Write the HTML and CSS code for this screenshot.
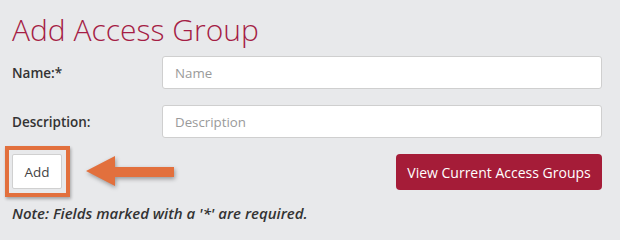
FILE: index.html
```html
<!DOCTYPE html>
<html lang="en">
<head>
<meta charset="utf-8">
<title>Add Access Group</title>
<link rel="stylesheet" href="styles.css">
</head>
<body>
<div class="page">
  <h1 class="title">Add Access Group</h1>
  <div class="row">
    <label class="label" for="name">Name:*</label>
    <input class="field" id="name" type="text" placeholder="Name">
  </div>
  <div class="row">
    <label class="label" for="desc">Description:</label>
    <input class="field" id="desc" type="text" placeholder="Description">
  </div>
  <div class="actions">
    <div class="add-wrap">
      <button class="btn-add" type="button">Add</button>
      <span class="highlight"></span>
      <svg class="arrow" width="94" height="36" viewBox="0 0 94 36">
        <path d="M2 18 L31 3 L31 14 L90 14 L90 24 L31 24 L31 33 Z" fill="#e2703d"/>
      </svg>
    </div>
    <button class="btn-view" type="button">View Current Access Groups</button>
  </div>
  <p class="note">Note: Fields marked with a '*' are required.</p>
</div>
</body>
</html>
```

FILE: styles.css
```css
html, body {
  margin: 0;
  padding: 0;
}
body {
  background: #e8e9eb;
  font-family: "Open Sans", "DejaVu Sans", sans-serif;
  color: #333;
}
.page {
  width: 620px;
  height: 234px;
  box-sizing: border-box;
  padding: 10px 18px 0 12px;
  display: flex;
  flex-direction: column;
}
.title {
  margin: 0 0 6px 0;
  font-size: 30px;
  line-height: 40px;
  font-weight: 300;
  color: #a51d45;
}
.row {
  display: flex;
  align-items: center;
  margin-bottom: 16px;
}
.label {
  width: 150px;
  flex: none;
  font-size: 13.5px;
  font-weight: 600;
  color: #333;
}
.field {
  flex: 1;
  height: 33px;
  box-sizing: border-box;
  border: 1px solid #cfcfcf;
  border-radius: 3px;
  background: #fff;
  padding: 0 12px;
  font-family: "Open Sans", sans-serif;
  font-size: 13.3px;
  color: #333;
  outline: none;
}
.field::placeholder {
  color: #9a9a9a;
}
.actions {
  display: flex;
  justify-content: space-between;
  align-items: flex-start;
}
.add-wrap {
  position: relative;
  width: 50px;
  height: 35px;
}
.btn-add {
  width: 50px;
  height: 35px;
  box-sizing: border-box;
  border: 1px solid #d0d0d0;
  border-radius: 2px;
  background: #fff;
  font-family: "Open Sans", sans-serif;
  font-size: 13.5px;
  color: #444;
  padding: 0;
}
.highlight {
  position: absolute;
  left: -7px;
  top: -8px;
  width: 65px;
  height: 51px;
  box-sizing: border-box;
  border: 4px solid #e2703d;
  box-shadow: 1px 2px 3px rgba(0, 0, 0, 0.3);
}
.arrow {
  position: absolute;
  left: 72px;
  top: -1px;
  filter: drop-shadow(1px 2px 2px rgba(0, 0, 0, 0.35));
}
.btn-view {
  width: 206px;
  height: 36px;
  border: none;
  border-radius: 4px;
  background: #a51c38;
  color: #fff;
  font-family: "Open Sans", sans-serif;
  font-size: 14px;
  padding: 0;
}
.note {
  margin: 13px 0 0 0;
  font-size: 15px;
  line-height: 20px;
  font-style: italic;
  font-weight: 600;
  color: #333;
}
```
